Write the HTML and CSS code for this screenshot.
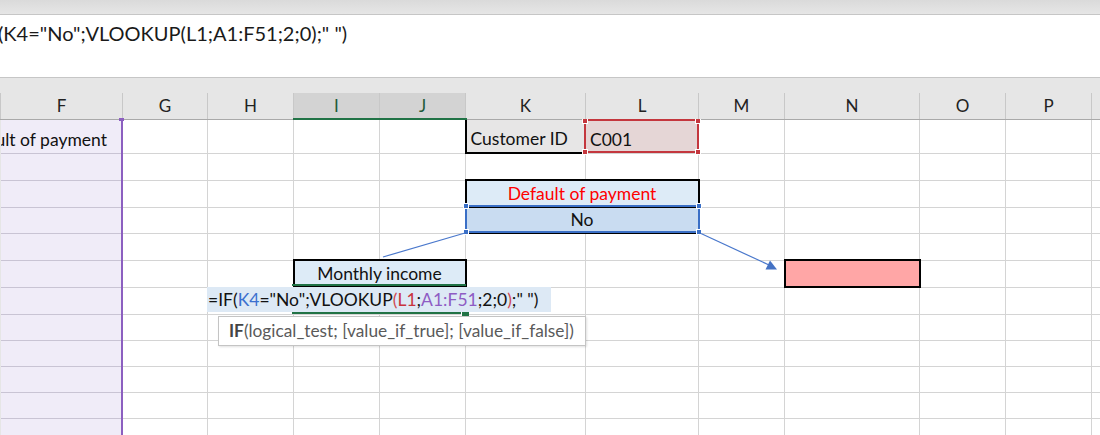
FILE: index.html
```html
<!DOCTYPE html>
<html lang="en">
<head>
  <meta charset="UTF-8" />
  <meta name="viewport" content="width=device-width, initial-scale=1.0" />
  <title>Customer lookup - Excel</title>
  <link rel="stylesheet" href="styles.css">
</head>
<body>

  <div class="ribbon-edge"></div>
  <div class="formula-bar">
    <span class="formula-text">(K4="No";VLOOKUP(L1;A1:F51;2;0);" ")</span>
  </div>

  <div class="sheet">
    <table class="grid">
      <colgroup>
        <col class="c-f"><col class="c-g"><col class="c-h"><col class="c-i"><col class="c-j"><col class="c-k">
        <col class="c-l"><col class="c-m"><col class="c-n"><col class="c-o"><col class="c-p"><col class="c-q">
      </colgroup>
      <thead>
        <tr>
          <th>F</th><th>G</th><th>H</th><th class="picked">I</th><th class="picked">J</th><th>K</th>
          <th>L</th><th>M</th><th>N</th><th>O</th><th>P</th><th>Q</th>
        </tr>
      </thead>
      <tbody>
        <tr class="first">
          <td class="in-range"><div class="spill">Default of payment</div></td>
          <td></td><td></td><td></td><td></td>
          <td class="label">Customer ID</td>
          <td class="lookup">C001</td>
          <td></td><td></td><td></td><td></td><td></td>
        </tr>
        <tr class="r27">
          <td class="in-range"></td><td></td><td></td><td></td><td></td><td></td>
          <td></td><td></td><td></td><td></td><td></td><td></td>
        </tr>
        <tr class="r27">
          <td class="in-range"></td><td></td><td></td><td></td><td></td>
          <td colspan="2" class="box caption">Default of payment</td>
          <td></td><td></td><td></td><td></td><td></td>
        </tr>
        <tr>
          <td class="in-range"></td><td></td><td></td><td></td><td></td>
          <td colspan="2" class="box answer">No</td>
          <td></td><td></td><td></td><td></td><td></td>
        </tr>
        <tr class="r27">
          <td class="in-range"></td><td></td><td></td><td></td><td></td><td></td>
          <td></td><td></td><td></td><td></td><td></td><td></td>
        </tr>
        <tr class="r27">
          <td class="in-range"></td><td></td><td></td>
          <td colspan="2" class="box income">Monthly income</td>
          <td></td><td></td><td></td>
          <td class="box flag"></td>
          <td></td><td></td><td></td>
        </tr>
        <tr class="r27">
          <td class="in-range"></td><td></td><td></td>
          <td colspan="2"></td>
          <td></td><td></td><td></td><td></td><td></td><td></td><td></td>
        </tr>
        <tr>
          <td class="in-range"></td><td></td><td></td><td></td><td></td><td></td>
          <td></td><td></td><td></td><td></td><td></td><td></td>
        </tr>
        <tr>
          <td class="in-range"></td><td></td><td></td><td></td><td></td><td></td>
          <td></td><td></td><td></td><td></td><td></td><td></td>
        </tr>
        <tr>
          <td class="in-range"></td><td></td><td></td><td></td><td></td><td></td>
          <td></td><td></td><td></td><td></td><td></td><td></td>
        </tr>
        <tr>
          <td class="in-range"></td><td></td><td></td><td></td><td></td><td></td>
          <td></td><td></td><td></td><td></td><td></td><td></td>
        </tr>
        <tr>
          <td class="in-range"></td><td></td><td></td><td></td><td></td><td></td>
          <td></td><td></td><td></td><td></td><td></td><td></td>
        </tr>
      </tbody>
    </table>
  </div>

  <!-- reference highlights drawn while the formula is being edited -->
  <div class="ref-range ref-purple">
    <span class="handle tr"></span>
  </div>
  <div class="ref-range ref-red">
    <span class="handle tl"></span><span class="handle tr"></span>
    <span class="handle bl"></span><span class="handle br"></span>
  </div>
  <div class="ref-range ref-blue">
    <span class="handle tl"></span><span class="handle tr"></span>
    <span class="handle bl"></span><span class="handle br"></span>
  </div>

  <div class="active-cell"><span class="fill-handle"></span></div>

  <svg class="arrows" width="1100" height="435" viewBox="0 0 1100 435">
    <line x1="465" y1="233" x2="383" y2="257" />
    <line x1="701" y1="233.5" x2="769" y2="265" />
    <polygon points="777,269.5 765.5,269.5 770,260.5" />
  </svg>

  <div class="cell-editor">=IF(<span class="ref-k">K4</span>="No";VLOOKUP<span class="paren">(</span><span class="ref-l">L1</span>;<span class="ref-a">A1:F51</span>;2;0<span class="paren">)</span>;" ")</div>

  <div class="tooltip"><b>IF</b>(logical_test; [value_if_true]; [value_if_false])</div>

</body>
</html>
```

FILE: styles.css
```css
body {
  margin: 0;
  width: 1100px;
  height: 435px;
  overflow: hidden;
  position: relative;
  background: #fff;
  font-family: Lato, "Liberation Sans", sans-serif;
  color: #111;
}

.ribbon-edge {
  height: 14px;
  background: linear-gradient(#dadada, #e6e6e6);
  border-bottom: 1px solid #c6c6c6;
}

.formula-bar {
  height: 62px;
  background: #fff;
  border-bottom: 1px solid #c6c6c6;
  overflow: hidden;
}

.formula-text {
  display: block;
  margin: 5px 0 0 -2px;
  font-size: 20px;
  line-height: 26px;
  white-space: nowrap;
  color: #1a1a1a;
}

.sheet {
  background: #e6e6e6;
  padding-top: 15px;
}

.grid {
  border-collapse: collapse;
  table-layout: fixed;
  width: 1177px;
}

.c-f { width: 122px; }
.c-g { width: 85px; }
.c-h, .c-i, .c-j { width: 86px; }
.c-k { width: 120px; }
.c-l { width: 113px; }
.c-m { width: 86px; }
.c-n { width: 135px; }
.c-o, .c-p, .c-q { width: 86px; }

.grid th {
  height: 25px;
  padding: 0;
  background: #e6e6e6;
  border-left: 1px solid #c8c8c8;
  border-right: 1px solid #c8c8c8;
  border-bottom: 1px solid #a9a9a9;
  font-size: 17px;
  font-weight: normal;
  color: #222;
  line-height: 25px;
}

.grid th.picked {
  background: #d3d3d3;
  color: #1f5a38;
  border-bottom: 2px solid #217346;
}

.grid tr {
  height: 26px;
}

.grid tr.r27 {
  height: 27px;
}

.grid tr.first {
  height: 34px;
}

.grid td {
  padding: 0 4px;
  border: 1px solid #d4d4d4;
  background: #fff;
  font-size: 17.5px;
  white-space: nowrap;
  overflow: hidden;
  vertical-align: bottom;
  line-height: 24px;
}

.grid tr.first td {
  padding-bottom: 1px;
}

.grid td.in-range {
  background: #f0ecf8;
  border-color: #c9c4d4;
  border-left: none;
}

.spill {
  display: flex;
  justify-content: flex-end;
  padding-right: 11px;
}

.grid td.label {
  background: #e7e6e6;
  border-left: 2px solid #000;
  border-bottom: 2px solid #000;
}

.grid td.lookup {
  background: #e5d6d6;
}

.grid td.box {
  border: 2px solid #000;
  text-align: center;
  background: #ddebf7;
}

.grid td.caption {
  color: #ff0000;
}

.grid td.answer {
  background: #c9dcf1;
}

.grid td.flag {
  background: #ffa6a6;
}

.ref-range {
  position: absolute;
  box-sizing: border-box;
}

.ref-purple {
  left: 121px;
  top: 119px;
  width: 2px;
  height: 320px;
  background: #8c5fc0;
}

.ref-red {
  left: 584px;
  top: 119px;
  width: 115px;
  height: 34px;
  border: 2px solid #c4373e;
}

.ref-blue {
  left: 465px;
  top: 205px;
  width: 235px;
  height: 28px;
  border: 2px solid #3a6fc6;
}

.handle {
  position: absolute;
  width: 6px;
  height: 6px;
  border: 1px solid #fff;
  box-sizing: border-box;
}

.ref-red .handle { background: #c4373e; }
.ref-blue .handle { background: #3a6fc6; }
.ref-purple .handle { background: #8c5fc0; }

.handle.tl { left: -4px; top: -4px; }
.handle.tr { right: -4px; top: -4px; }
.handle.bl { left: -4px; bottom: -4px; }
.handle.br { right: -4px; bottom: -4px; }

.ref-red .handle.tl,
.ref-red .handle.tr {
  top: -2px;
  height: 5px;
  border-top: none;
}

.ref-purple .handle.tr {
  right: -1px;
  top: -1px;
  width: 5px;
  height: 3px;
  border: none;
}

.active-cell {
  position: absolute;
  left: 292px;
  top: 284px;
  width: 174px;
  height: 30px;
  box-sizing: border-box;
  border-top: 2px solid #217346;
  border-bottom: 2px solid #217346;
}

.fill-handle {
  position: absolute;
  right: -3px;
  bottom: -4px;
  width: 7px;
  height: 6px;
  background: #217346;
  border-left: 1px solid #fff;
}

.arrows {
  position: absolute;
  left: 0;
  top: 0;
  pointer-events: none;
}

.arrows line {
  stroke: #4a78cc;
  stroke-width: 1.2;
}

.arrows polygon {
  fill: #4472c4;
}

.cell-editor {
  position: absolute;
  left: 207px;
  top: 287px;
  width: 344px;
  height: 25px;
  padding-left: 1px;
  box-sizing: border-box;
  background: #dde9f5;
  font-size: 17.5px;
  line-height: 25px;
  white-space: nowrap;
  color: #111;
}

.ref-k { color: #3b70cf; }
.ref-l { color: #c8333d; }
.ref-a { color: #8e5cc4; }
.paren { color: #cf4a52; }

.tooltip {
  position: absolute;
  left: 218px;
  top: 316px;
  width: 368px;
  height: 30px;
  box-sizing: border-box;
  padding-left: 10px;
  background: #fff;
  border: 1px solid #c4c4c4;
  box-shadow: 1px 1px 2px rgba(0, 0, 0, 0.12);
  font-size: 17.3px;
  line-height: 28px;
  color: #5a5a5a;
  white-space: nowrap;
}

.tooltip b {
  color: #444;
}
```
